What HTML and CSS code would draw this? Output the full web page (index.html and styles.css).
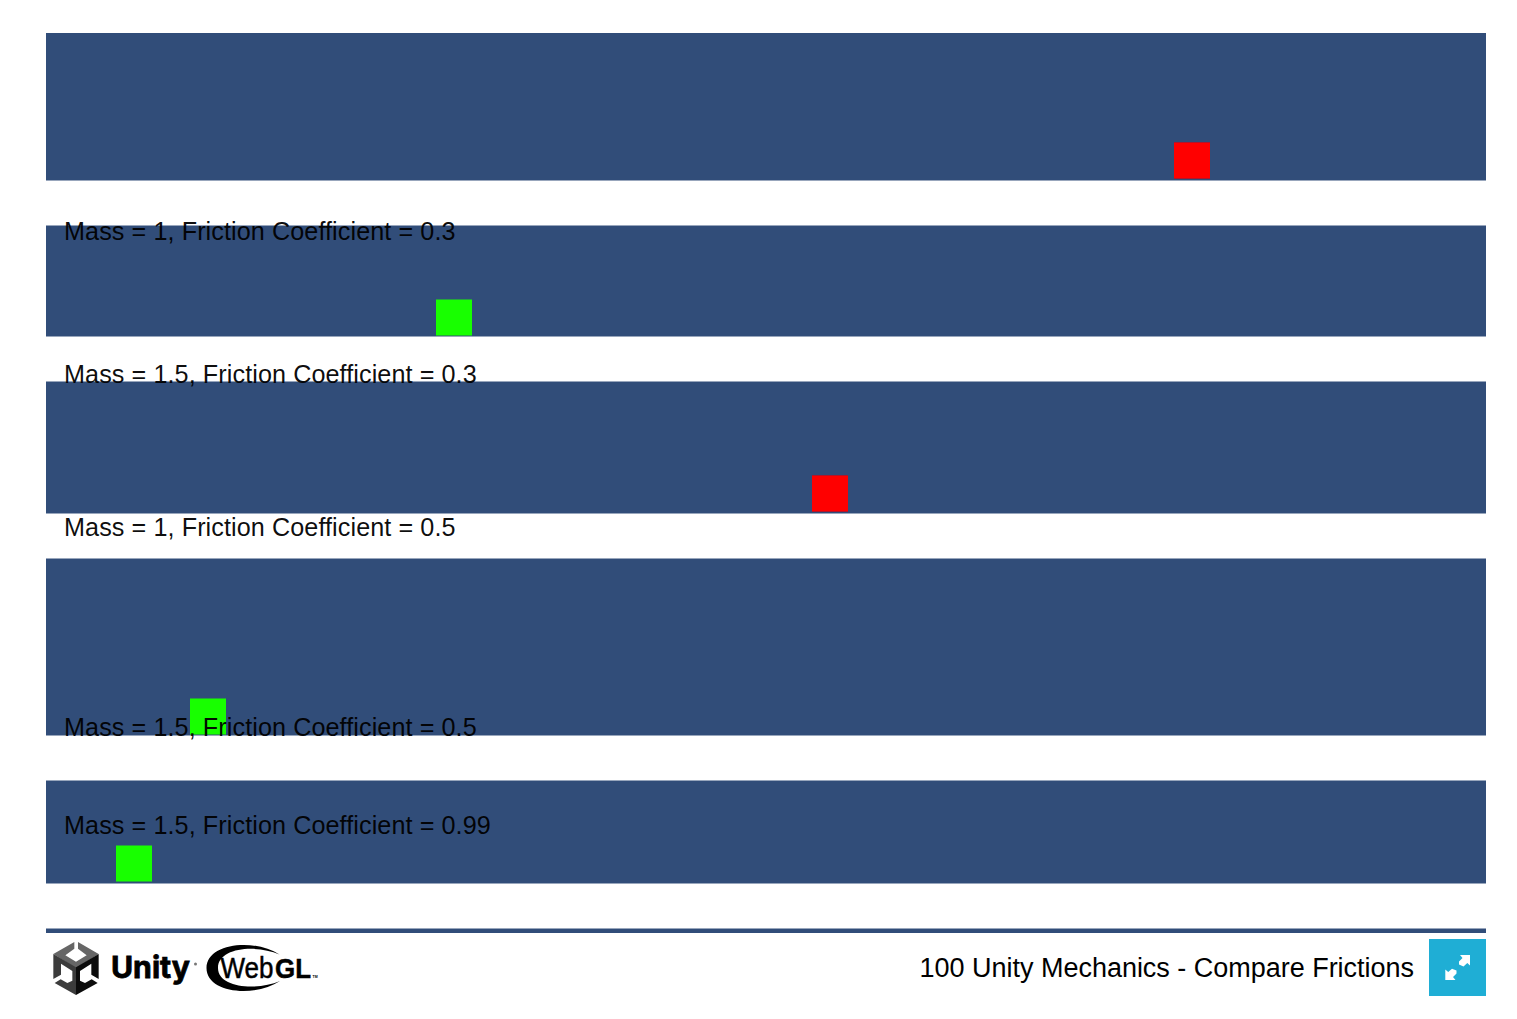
FILE: index.html
```html
<!DOCTYPE html>
<html lang="en">
<head>
<meta charset="utf-8">
<title>100 Unity Mechanics - Compare Frictions</title>
<link rel="stylesheet" href="styles.css">
</head>
<body>
<main class="player">
  <div class="scene">
    <div class="lane lane-1"><i class="box red"></i></div>
    <div class="floor"></div>
    <div class="lane lane-2"><i class="box green"></i><span class="label">Mass = 1, Friction Coefficient = 0.3</span></div>
    <div class="floor"></div>
    <div class="lane lane-3"><i class="box red"></i><span class="label">Mass = 1.5, Friction Coefficient = 0.3</span></div>
    <div class="floor"></div>
    <div class="lane lane-4"><i class="box green"></i><span class="label label-above">Mass = 1, Friction Coefficient = 0.5</span><span class="label">Mass = 1.5, Friction Coefficient = 0.5</span></div>
    <div class="floor"></div>
    <div class="lane lane-5"><i class="box green"></i><span class="label">Mass = 1.5, Friction Coefficient = 0.99</span></div>
    <div class="floor"></div>
  </div>
  <footer class="footer">
    <svg class="logos" viewBox="0 0 280 63" role="img" aria-label="Unity WebGL">
      <g transform="translate(-6 -13) scale(.33333)">
        <path fill="#666" d="M103 66V86L76 106L108 125L140 106L114 86V66L176 102L108 145L40 102Z"/>
        <path fill="#3c3c3c" d="M40 102L108 142V225L44 189L62 178L82 189L97 182V153L63 131V164L40 177Z"/>
        <path fill="#0c0c0c" d="M176 102L108 142V225L173 189L155 178L135 189L120 182V153L154 131V164L176 177Z"/>
      </g>
      <text class="unity" x="65" y="45" textLength="79" lengthAdjust="spacingAndGlyphs">Unity</text>
      <circle cx="149.500" cy="31" r="1.500" fill="#777"/>
      <path d="M233.500 21.500C208 5 160.500 10 160.500 35C160.500 60 208 65 234 48C211 58 172 55 172 35C172 15 209 11 233.500 21.500Z"/>
      <text class="web" x="174.500" y="45" textLength="53" lengthAdjust="spacingAndGlyphs">Web</text>
      <text class="gl" x="229" y="45" textLength="36" lengthAdjust="spacingAndGlyphs">GL</text>
      <text class="tm" x="266.500" y="44.500">TM</text>
    </svg>
    <div class="title">100 Unity Mechanics - Compare Frictions</div>
    <button class="fullscreen" aria-label="Fullscreen">
      <svg viewBox="0 0 57 57"><path d="M31 16H41V26.500L38.300 24L34.500 27.500L30 25.500V22.500L33.500 19ZM16.300 30.500L19.200 33L23 29.800L27.500 31.500V34.500L24 38L26.500 41H16.300Z"/></svg>
    </button>
  </footer>
</main>
</body>
</html>
```
FILE: styles.css
```css
body {
  margin: 0;
  background: #fff;
  color: #000;
  font-family: "Liberation Sans", Arial, sans-serif;
}
.player {
  width: 1440px;
  margin: 33px 0 0 46px;
}
.scene {
  height: 900px;
  overflow: hidden;
  background: #314d79;
}
.lane { position: relative; }
.lane-1 { height: 147px; }
.lane-2 { height: 110px; }
.lane-3 { height: 131px; }
.lane-4 { height: 176px; }
.lane-5 { height: 102px; }
.floor {
  height: 44px;
  background: #fff;
  border: solid #98a6bc;
  border-width: 1px 0;
}
.box {
  position: absolute;
  box-sizing: border-box;
  width: 36px;
  height: 37px;
  border: solid;
  border-width: 1px 0;
}
.red { background: #f00; border-color: #b0152a; }
.green { background: #18ff00; border-color: #25a63c; }
.lane-1 .box { left: 1128px; top: 109px; }
.lane-2 .box { left: 390px; top: 73px; }
.lane-3 .box { left: 766px; top: 93px; }
.lane-4 .box { left: 144px; top: 139px; }
.lane-5 .box { left: 70px; top: 64px; }
.label {
  position: absolute;
  left: 18px;
  color: rgba(0, 0, 0, .95);
  font-size: 25.200px;
  line-height: 30px;
  letter-spacing: .08px;
  white-space: nowrap;
}
.lane-2 .label { top: -10px; }
.lane-3 .label { top: -23px; }
.lane-4 .label { top: 153px; }
.lane-4 .label-above { top: -47px; }
.lane-5 .label { top: 29px; }
.footer {
  display: flex;
  align-items: flex-start;
  height: 63px;
}
.logos { width: 280px; height: 63px; }
.unity { font-family: Inter, "Liberation Sans", sans-serif; font-weight: bold; font-size: 30px; stroke: #000; stroke-width: .8px; }
.web { font-size: 30px; stroke: #000; stroke-width: .5px; }
.gl { font-weight: bold; font-size: 28.500px; stroke: #000; stroke-width: .5px; }
.tm { font-size: 3.500px; font-weight: bold; }
.title {
  margin: 7px 15px 0 auto;
  font-size: 27px;
  line-height: 57px;
  letter-spacing: -.02px;
  white-space: nowrap;
}
.fullscreen {
  width: 57px;
  height: 57px;
  margin-top: 6px;
  padding: 0;
  border: 0;
  background: #1faed5;
}
.fullscreen svg { display: block; width: 57px; height: 57px; fill: #fff; }
```
